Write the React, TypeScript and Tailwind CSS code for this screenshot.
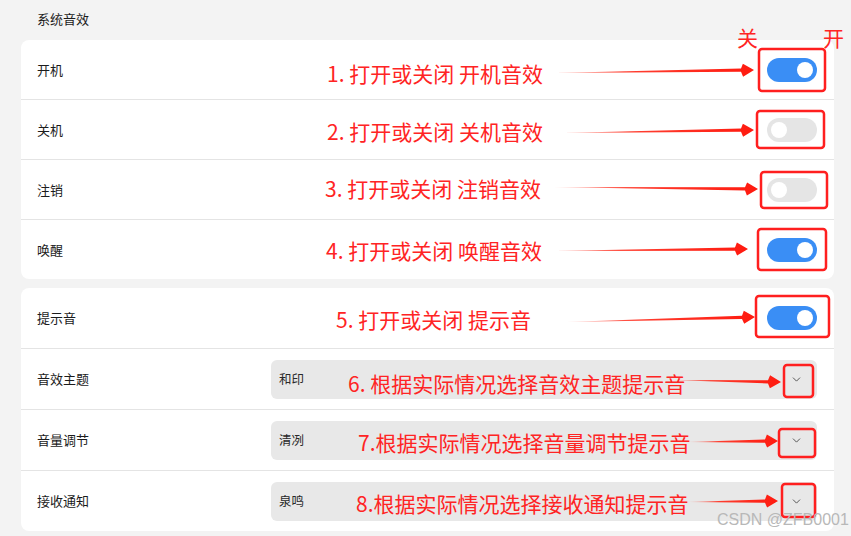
import React from "react";
import { ChevronDown } from "lucide-react";

const FONT = { fontFamily: '"Noto Sans CJK SC", "Noto Sans", sans-serif' };

function Toggle({ on }: { on: boolean }) {
  return (
    <div
      className={`w-[50px] h-[24px] rounded-full flex items-center px-[4px] ${
        on ? "bg-[#3a8ef5] justify-end" : "bg-[#e5e5e5] justify-start"
      }`}
    >
      <div className="w-[16px] h-[16px] rounded-full bg-white" />
    </div>
  );
}

function ToggleRow({ label, on, h, last }: { label: string; on: boolean; h: string; last?: boolean }) {
  return (
    <div
      className={`flex items-center justify-between pl-[16px] pr-[17px] ${h} ${
        last ? "" : "border-b border-[#e4e4e4]"
      }`}
    >
      <span className="text-[13px] text-[#1c1c1c]">{label}</span>
      <Toggle on={on} />
    </div>
  );
}

function SelectRow({ label, value, last }: { label: string; value: string; last?: boolean }) {
  return (
    <div
      className={`flex items-center pl-[16px] pr-[17px] ${
        last ? "h-[60px]" : "h-[61px] border-b border-[#e4e4e4]"
      }`}
    >
      <span className="text-[13px] text-[#1c1c1c] w-[234px]">{label}</span>
      <div className="flex-1 h-[39px] rounded-[6px] bg-[#e8e8e8] flex items-center justify-between pl-[8px] pr-[14px]">
        <span className="text-[12.5px] text-[#2a2a2a]">{value}</span>
        <ChevronDown size={13} strokeWidth={1.7} color="#4a4a4a" />
      </div>
    </div>
  );
}

type Arrow = { x1: number; y1: number; x2: number; y2: number };

function ArrowShape({ a, id }: { a: Arrow; id: string }) {
  const dx = a.x2 - a.x1;
  const dy = a.y2 - a.y1;
  const len = Math.sqrt(dx * dx + dy * dy);
  const ux = dx / len;
  const uy = dy / len;
  const nx = -uy;
  const ny = ux;
  const headLen = 13;
  const bx = a.x2 - ux * headLen;
  const by = a.y2 - uy * headLen;
  const sw = 1.6;
  const hw = 6.5;
  const pts = [
    [a.x1, a.y1],
    [bx + nx * sw, by + ny * sw],
    [bx + ux * 2 + nx * hw, by + uy * 2 + ny * hw],
    [a.x2, a.y2],
    [bx + ux * 2 - nx * hw, by + uy * 2 - ny * hw],
    [bx - nx * sw, by - ny * sw],
  ]
    .map((p) => `${p[0].toFixed(1)},${p[1].toFixed(1)}`)
    .join(" ");
  return (
    <g>
      <defs>
        <linearGradient id={id} gradientUnits="userSpaceOnUse" x1={a.x1} y1={a.y1} x2={a.x2} y2={a.y2}>
          <stop offset="0" stopColor="#ff2a1a" stopOpacity="0.25" />
          <stop offset="0.35" stopColor="#ff2a1a" stopOpacity="0.9" />
          <stop offset="1" stopColor="#ff1a0f" stopOpacity="1" />
        </linearGradient>
      </defs>
      <polygon points={pts} fill={`url(#${id})`} />
    </g>
  );
}

const arrows: Arrow[] = [
  { x1: 553, y1: 73, x2: 754, y2: 70 },
  { x1: 562, y1: 133, x2: 754, y2: 130 },
  { x1: 554, y1: 187, x2: 758, y2: 189 },
  { x1: 552, y1: 251, x2: 748, y2: 249 },
  { x1: 567, y1: 322, x2: 755, y2: 317 },
  { x1: 672, y1: 380, x2: 781, y2: 382 },
  { x1: 688, y1: 442, x2: 778, y2: 441 },
  { x1: 688, y1: 502, x2: 778, y2: 501 },
];

const boxes = [
  { x: 759, y: 49, w: 66, h: 42 },
  { x: 757, y: 111, w: 67, h: 37 },
  { x: 761, y: 172, w: 66, h: 36 },
  { x: 758, y: 229, w: 68, h: 41 },
  { x: 756, y: 296, w: 73, h: 41 },
  { x: 784, y: 365, w: 29, h: 32 },
  { x: 779, y: 429, w: 36, h: 28 },
  { x: 782, y: 484, w: 33, h: 33 },
];

const notes = [
  { text: "1. 打开或关闭 开机音效", x: 327, y: 59 },
  { text: "2. 打开或关闭 关机音效", x: 327, y: 117 },
  { text: "3. 打开或关闭 注销音效", x: 325, y: 174 },
  { text: "4. 打开或关闭 唤醒音效", x: 326, y: 236 },
  { text: "5. 打开或关闭 提示音", x: 336, y: 305 },
  { text: "6. 根据实际情况选择音效主题提示音", x: 348, y: 369 },
  { text: "7.根据实际情况选择音量调节提示音", x: 358, y: 428 },
  { text: "8.根据实际情况选择接收通知提示音", x: 356, y: 489 },
  { text: "关", x: 737, y: 23 },
  { text: "开", x: 823, y: 23 },
];

export default function App() {
  return (
    <div className="relative w-[851px] h-[536px] bg-[#f3f3f3] overflow-hidden" style={FONT}>
      <div className="h-[40px] flex items-center pl-[37px] pb-[3px] text-[13px] text-[#1c1c1c]">系统音效</div>

      <div className="ml-[21px] w-[813px] bg-white rounded-[8px] flex flex-col">
        <ToggleRow label="开机" on h="h-[60px]" />
        <ToggleRow label="关机" on={false} h="h-[60px]" />
        <ToggleRow label="注销" on={false} h="h-[60px]" />
        <ToggleRow label="唤醒" on h="h-[59px]" last />
      </div>

      <div className="ml-[21px] mt-[9px] w-[813px] bg-white rounded-[8px] flex flex-col">
        <ToggleRow label="提示音" on h="h-[61px]" />
        <SelectRow label="音效主题" value="和印" />
        <SelectRow label="音量调节" value="清冽" />
        <SelectRow label="接收通知" value="泉鸣" last />
      </div>

      {/* annotation overlay */}
      <svg className="absolute left-0 top-0 pointer-events-none" width={851} height={536}>
        {boxes.map((b, i) => (
          <rect key={i} x={b.x} y={b.y} width={b.w} height={b.h} rx={3} fill="none" stroke="#ff1f1f" strokeWidth={2.5} />
        ))}
        {arrows.map((a, i) => (
          <ArrowShape key={i} a={a} id={`ag${i}`} />
        ))}
      </svg>
      {notes.map((n, i) => (
        <span
          key={i}
          className="absolute text-[21px] leading-[28px] text-[#ff2424] whitespace-nowrap"
          style={{ left: n.x, top: n.y }}
        >
          {n.text}
        </span>
      ))}
      <span
        className="absolute left-[717px] top-[510px] text-[16px] leading-[20px] text-[#b8b8b8] whitespace-nowrap"
        style={{ fontFamily: '"Liberation Sans", Arial, sans-serif' }}
      >
        CSDN @ZFB0001
      </span>
    </div>
  );
}
